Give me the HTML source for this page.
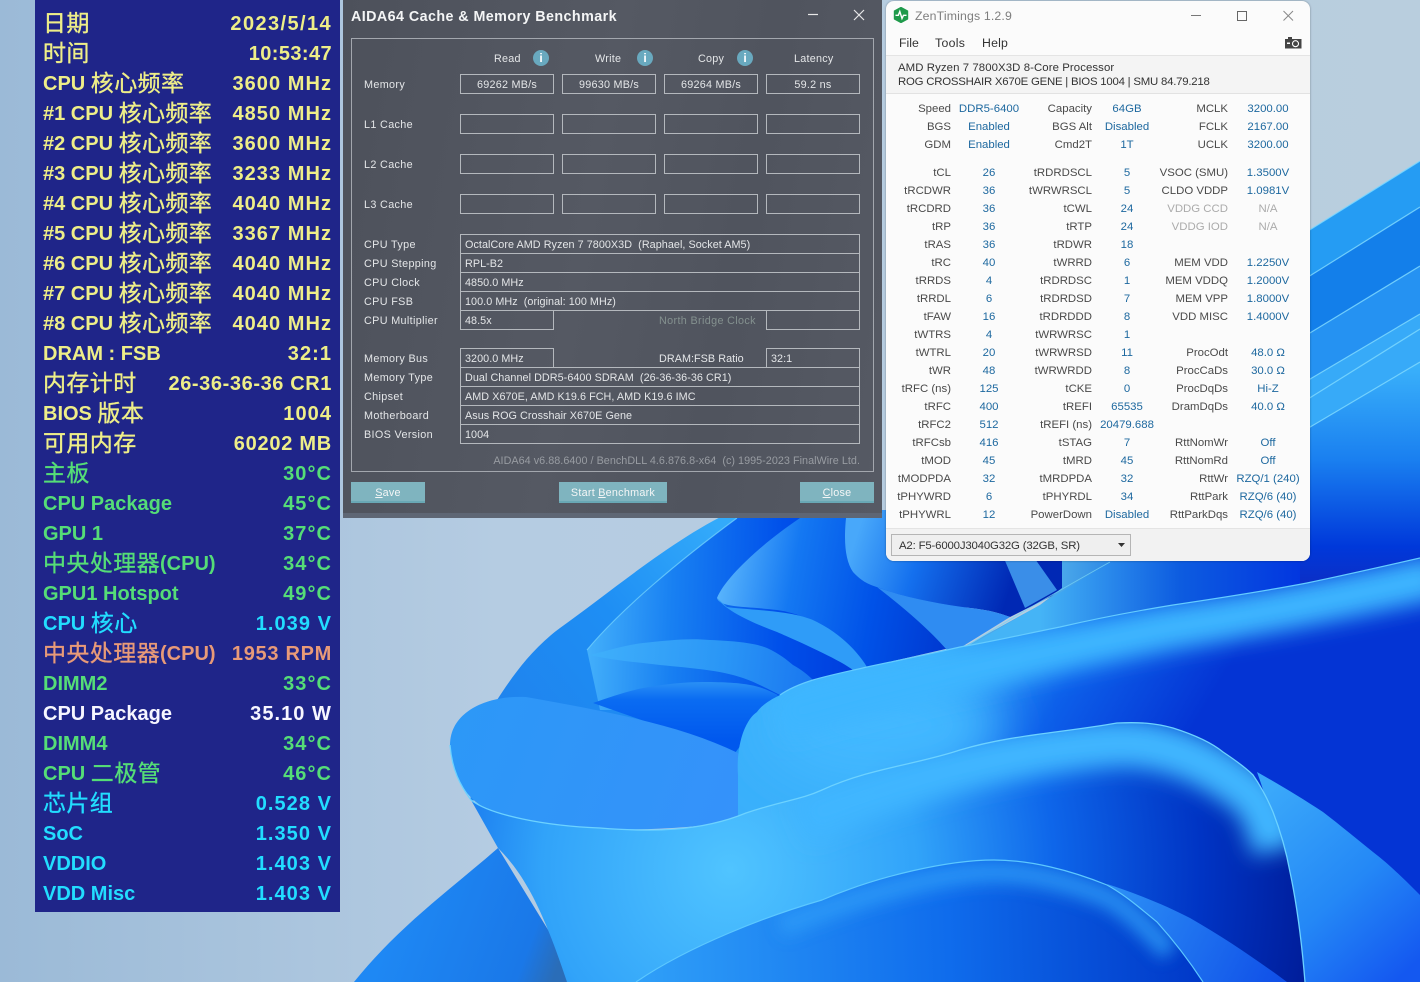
<!DOCTYPE html>
<html lang="zh"><head><meta charset="utf-8"><title>AIDA64 / ZenTimings</title>
<style>
html,body{margin:0;padding:0;width:1420px;height:982px;overflow:hidden;background:#a9c3dc}
*{box-sizing:border-box}
#wp{position:absolute;left:0;top:0}
#side{position:absolute;left:35px;top:0;width:305px;height:912px;background:#1f2589;font:bold 20px/30px "Liberation Sans","Noto Sans CJK SC",sans-serif}
#side div{position:absolute;left:8px;width:289px;height:30px;white-space:nowrap;margin-top:2px}
#side s{position:absolute;right:0;top:0;text-decoration:none;letter-spacing:1.05px}
#side em{font:400 23px/0 "Noto Sans CJK SC",sans-serif;-webkit-text-stroke:.35px currentColor;position:relative;top:1px;letter-spacing:.4px}
.y{color:#eeee88}.g{color:#55dd77}.c{color:#22ddff}.o{color:#e89a78}.w{color:#f6f6ff}
#ai{position:absolute;left:343px;top:0;width:539px;height:518px;background:linear-gradient(100deg,#4d515b,#555963 45%,#50545e 70%,#565a64);font:10.8px/19px "Liberation Sans",sans-serif;color:#e4e6e8;letter-spacing:.25px}
#ai:after{content:"";position:absolute;left:0;right:0;bottom:0;height:5px;background:#5e6674}
#ai .a{position:absolute;white-space:nowrap;margin-top:1px}
#ai .t{position:absolute;left:8px;top:7px;font:bold 14.3px/20px "Liberation Sans",sans-serif;color:#f4f5f6;letter-spacing:.43px}
#ai .f{position:absolute;left:8px;top:38px;width:523px;height:434px;border:1px solid #a3a7ae}
#ai .b{position:absolute;border:1px solid #b4b8bd;height:20px;line-height:20px;text-align:center;white-space:nowrap;overflow:hidden}
#ai .n{position:absolute;left:117px;width:400px;height:20px;border:1px solid #b4b8bd;padding:1px 0 0 4px;line-height:18px;white-space:nowrap;letter-spacing:.05px}
#ai .l{position:absolute;left:21px;white-space:nowrap;margin-top:1px;letter-spacing:.35px}
#ai .btn{position:absolute;top:482px;height:21px;background:#7fb4bf;border-bottom:2px solid #69a8b5;text-align:center;line-height:23px;color:#f4f6f6}
#ai .i{position:absolute;top:50px;width:16px;height:16px;border-radius:50%;background:#69a9bf;color:#fff;font:bold 12px/16px "Liberation Sans",sans-serif;text-align:center;letter-spacing:0}
#zt{position:absolute;left:886px;top:1px;width:424px;height:560px;background:#fbfbfb;border-radius:8px;overflow:hidden;box-shadow:0 0 2px rgba(0,0,0,.35)}
#zx{position:absolute;left:0;top:0;width:1420px;height:982px;font:11.4px/18px "Liberation Sans",sans-serif;color:#444}
#zx .r{position:absolute;left:0;width:1420px;height:18px;margin-top:1px}
#zx .r b,#zx .r i{position:absolute;top:0;font-weight:400;font-style:normal;white-space:nowrap}
#zx .r b{color:#4a4a4a}
#zx .r i{color:#1d689f;text-align:center;width:110px}
.l1{right:469px}.l2{right:328px}.l3{right:192px}
.v1{left:934px}.v2{left:1072px}.v3{left:1213px}
#zx .r .d{color:#ababab}
#zx .x{position:absolute;white-space:nowrap}
</style></head><body>
<svg id="wp" width="1420" height="982" viewBox="0 0 1420 982" xmlns="http://www.w3.org/2000/svg">
<defs>
<linearGradient id="bg" x1="0" y1="0" x2="1" y2="0"><stop offset="0" stop-color="#9bbad7"/><stop offset=".35" stop-color="#b5cce2"/><stop offset="1" stop-color="#b9cede"/></linearGradient>
<linearGradient id="back" x1="500" y1="700" x2="720" y2="530" gradientUnits="userSpaceOnUse"><stop offset="0" stop-color="#1f84ee"/><stop offset=".5" stop-color="#1e8ef4"/><stop offset="1" stop-color="#33aafa"/></linearGradient>
<linearGradient id="p1" x1="590" y1="640" x2="860" y2="650" gradientUnits="userSpaceOnUse"><stop offset="0" stop-color="#42aefa"/><stop offset=".3" stop-color="#1880f2"/><stop offset=".7" stop-color="#0050ea"/><stop offset="1" stop-color="#003cdc"/></linearGradient>
<linearGradient id="la" x1="590" y1="650" x2="810" y2="680" gradientUnits="userSpaceOnUse"><stop offset="0" stop-color="#40b0fb"/><stop offset=".6" stop-color="#2a96f6"/><stop offset="1" stop-color="#1a78f0"/></linearGradient>
<linearGradient id="p2" x1="717" y1="598" x2="950" y2="640" gradientUnits="userSpaceOnUse"><stop offset="0" stop-color="#58b4fc"/><stop offset=".3" stop-color="#1478f2"/><stop offset=".65" stop-color="#0052e8"/><stop offset="1" stop-color="#0038d0"/></linearGradient>
<linearGradient id="p3" x1="855" y1="540" x2="1010" y2="590" gradientUnits="userSpaceOnUse"><stop offset="0" stop-color="#48a8fa"/><stop offset=".4" stop-color="#1470ee"/><stop offset="1" stop-color="#0028b4"/></linearGradient>
<linearGradient id="p4" x1="1062" y1="0" x2="1310" y2="0" gradientUnits="userSpaceOnUse"><stop offset="0" stop-color="#4aa8ea"/><stop offset=".4" stop-color="#1068e0"/><stop offset="1" stop-color="#0030e0"/></linearGradient>
<linearGradient id="p5" x1="1040" y1="0" x2="1320" y2="0" gradientUnits="userSpaceOnUse"><stop offset="0" stop-color="#45b4f6"/><stop offset=".5" stop-color="#0d5ce0"/><stop offset="1" stop-color="#0030e0"/></linearGradient>
<linearGradient id="mid" x1="900" y1="650" x2="1150" y2="800" gradientUnits="userSpaceOnUse"><stop offset=".1" stop-color="#3ab0fb"/><stop offset=".55" stop-color="#0d60ea"/><stop offset="1" stop-color="#0434d4"/></linearGradient>
<linearGradient id="roll" x1="450" y1="700" x2="740" y2="810" gradientUnits="userSpaceOnUse"><stop offset="0" stop-color="#2c98f7"/><stop offset="1" stop-color="#3592fa"/></linearGradient>
<linearGradient id="rose" x1="700" y1="682" x2="700" y2="740" gradientUnits="userSpaceOnUse"><stop offset="0" stop-color="#2a90f5"/><stop offset=".3" stop-color="#0a6cf2"/><stop offset="1" stop-color="#0058ee"/></linearGradient>
<radialGradient id="wave" cx="730" cy="870" r="590" gradientUnits="userSpaceOnUse"><stop offset="0" stop-color="#50c4ff"/><stop offset=".32" stop-color="#31a3f9"/><stop offset=".55" stop-color="#0e66ea"/><stop offset=".8" stop-color="#0034c4"/><stop offset="1" stop-color="#001c98"/></radialGradient>
<linearGradient id="pb" x1="640" y1="960" x2="1200" y2="940" gradientUnits="userSpaceOnUse"><stop offset="0" stop-color="#2f9ff8"/><stop offset=".55" stop-color="#0f6cec"/><stop offset="1" stop-color="#0038c8"/></linearGradient>
<linearGradient id="sl" x1="1270" y1="790" x2="1420" y2="960" gradientUnits="userSpaceOnUse"><stop offset="0" stop-color="#3aa8fa"/><stop offset=".55" stop-color="#2488f6"/><stop offset="1" stop-color="#1458f0"/></linearGradient>
<linearGradient id="s2" x1="1110" y1="890" x2="1280" y2="980" gradientUnits="userSpaceOnUse"><stop offset="0" stop-color="#2c90f6"/><stop offset="1" stop-color="#1050e8"/></linearGradient>
<linearGradient id="bl" x1="400" y1="900" x2="560" y2="960" gradientUnits="userSpaceOnUse"><stop offset="0" stop-color="#1e88f4"/><stop offset=".8" stop-color="#1a78e8"/><stop offset="1" stop-color="#2a6db8"/></linearGradient>
<linearGradient id="rb" x1="0" y1="360" x2="0" y2="580" gradientUnits="userSpaceOnUse"><stop offset="0" stop-color="#3cb4fb"/><stop offset=".45" stop-color="#1a80f0"/><stop offset=".85" stop-color="#0038da"/><stop offset="1" stop-color="#0a30c8"/></linearGradient>
<filter id="bb" filterUnits="userSpaceOnUse" x="600" y="450" width="900" height="532"><feGaussianBlur stdDeviation="11"/></filter>
<filter id="bc" filterUnits="userSpaceOnUse" x="700" y="780" width="600" height="202"><feGaussianBlur stdDeviation="8"/></filter>
<filter id="bd" filterUnits="userSpaceOnUse" x="600" y="560" width="560" height="320"><feGaussianBlur stdDeviation="26"/></filter>
<clipPath id="wc"><path d="M471 800C490 815 545 826 600 828C650 832 700 832 746 813C785 800 800 800 822 790C870 768 915 765 960 750C1010 735 1060 733 1117 723C1140 722 1155 723 1173 728C1195 735 1212 743 1223 752C1235 760 1245 767 1253 775C1262 788 1268 800 1273 812C1280 830 1286 850 1290 872C1297 905 1302 945 1305 982L567 982C540 900 520 870 498 848Z"/></clipPath>
<clipPath id="mc"><path d="M738 775C736 745 745 720 757 712C762 705 770 700 780 695C790 688 800 684 813 680C830 675 850 671 867 667C900 660 930 654 960 647C990 642 1025 634 1060 627C1090 620 1130 612 1173 605C1220 598 1260 592 1307 583C1350 574 1385 566 1420 558L1420 982L738 982Z"/></clipPath>
<clipPath id="bc2"><path d="M636 982C690 945 770 915 822 900C880 875 950 860 994 860C1030 860 1070 870 1107 885C1125 895 1140 908 1157 922C1175 942 1190 962 1203 982Z"/></clipPath>
</defs>
<rect width="1420" height="982" fill="url(#bg)"/>
<path d="M354 982C400 925 450 890 498 848L580 982Z" fill="url(#bl)"/>
<path d="M760 500C693 522 620 585 560 628C530 650 510 680 497 700L470 800L740 830L880 700L880 500Z" fill="url(#back)"/>
<path d="M737 518C680 560 620 610 587 650L600 710L880 710L880 518Z" fill="url(#p1)"/>
<path d="M737 518C680 560 620 610 587 650" fill="none" stroke="#6fd0fd" stroke-width="1.1" opacity=".8"/>
<path d="M800 518C760 545 725 578 717 598C720 608 745 606 777 610C800 613 825 625 843 642C855 652 862 660 867 667L950 648L1000 518Z" fill="url(#p2)"/>
<path d="M717 598C725 610 750 622 777 632C800 642 840 660 853 670L867 667C860 655 843 635 817 622C795 610 745 610 727 607Z" fill="#2f9cf8"/>
<path d="M847 510C843 540 845 560 853 572C862 582 870 585 880 588C905 598 940 604 970 608C990 610 1002 614 1010 617L1064 590L1064 510Z" fill="url(#p3)"/>
<path d="M877 587C905 598 940 604 970 608C990 610 1002 614 1010 617L960 648L947 650C925 625 900 605 877 587Z" fill="#2f8cf2"/>
<path d="M1003 556L1033 556L1057 590L1025 608Z" fill="#3a8ee8"/>
<path d="M590 655C610 650 625 645 643 643C670 640 690 638 710 640C735 641 755 643 767 648C780 654 787 660 793 665C802 670 808 675 813 680L780 695C770 690 755 682 743 678C720 670 690 668 660 665C635 662 610 660 590 655Z" fill="url(#la)"/>
<path d="M593 703C610 697 625 692 643 688C665 684 685 682 703 682C725 682 740 683 750 685C762 687 770 691 778 695L735 753Z" fill="url(#rose)"/>
<path d="M526 697C490 695 450 710 450 745C452 775 465 795 480 805C510 825 620 840 745 820L738 753C680 725 610 712 526 697Z" fill="url(#roll)"/>
<path d="M1062 556L1062 588L1040 605L967 645L1060 640L1420 580L1420 470L1300 500Z" fill="url(#p4)"/>
<path d="M967 647L1040 605L1110 562L1320 556L1320 585L1060 627Z" fill="url(#p5)"/>
<path d="M967 646C1000 625 1060 590 1110 562" fill="none" stroke="#74d2f4" stroke-width="1" opacity=".8"/>
<path d="M1300 236L1420 161L1420 207L1300 282Z" fill="#259cf3"/>
<path d="M1300 282L1420 207L1420 266L1300 339Z" fill="#137fea"/>
<path d="M1300 339L1420 266L1420 314L1300 385Z" fill="#2592f2"/>
<path d="M1300 385L1420 314L1420 362L1300 433Z" fill="#37aaf8"/>
<path d="M1300 433L1420 362L1420 570L1300 600Z" fill="url(#rb)"/>
<g fill="none" stroke="#7cd8ff" stroke-width="1.2" opacity=".85"><path d="M1300 236L1420 161"/><path d="M1300 282L1420 207"/><path d="M1300 339L1420 266"/><path d="M1300 385L1420 314"/><path d="M1300 404L1420 329"/><path d="M1300 433L1420 362"/></g>
<path d="M738 775C736 745 745 720 757 712C762 705 770 700 780 695C790 688 800 684 813 680C830 675 850 671 867 667C900 660 930 654 960 647C990 642 1025 634 1060 627C1090 620 1130 612 1173 605C1220 598 1260 592 1307 583C1350 574 1385 566 1420 558L1420 982L738 982Z" fill="url(#mid)"/>
<g clip-path="url(#mc)"><ellipse cx="880" cy="725" rx="120" ry="60" fill="#42b8ff" filter="url(#bd)"/>
<path transform="translate(0,22)" d="M780 695C900 660 1060 627 1173 605C1260 592 1350 574 1440 554" fill="none" stroke="#3cb6ff" stroke-width="44" filter="url(#bb)"/></g>
<path d="M780 695C790 688 800 684 813 680C830 675 850 671 867 667C900 660 930 654 960 647C990 642 1025 634 1060 627C1090 620 1130 612 1173 605C1220 598 1260 592 1307 583C1350 574 1385 566 1420 558" fill="none" stroke="#64ccff" stroke-width="1.2"/>
<path d="M1257 772C1280 785 1300 797 1323 812C1340 825 1358 840 1373 852C1390 865 1405 880 1420 895L1420 982L1304 982C1292 900 1278 830 1257 772Z" fill="url(#sl)"/>
<path d="M471 800C490 815 545 826 600 828C650 832 700 832 746 813C785 800 800 800 822 790C870 768 915 765 960 750C1010 735 1060 733 1117 723C1140 722 1155 723 1173 728C1195 735 1212 743 1223 752C1235 760 1245 767 1253 775C1262 788 1268 800 1273 812C1280 830 1286 850 1290 872C1297 905 1302 945 1305 982L567 982C540 900 520 870 498 848Z" fill="url(#wave)"/>
<g clip-path="url(#wc)"><path transform="translate(0,20)" d="M800 800C880 768 1000 730 1117 723C1170 722 1215 745 1253 775C1265 790 1270 805 1276 830" fill="none" stroke="#3fb6ff" stroke-width="48" filter="url(#bb)"/></g>
<path d="M450 745C452 770 460 785 471 800C490 815 545 826 600 828C650 832 700 832 746 813C785 800 800 800 822 790C870 768 915 765 960 750C1010 735 1060 733 1117 723C1140 722 1155 723 1173 728C1195 735 1212 743 1223 752C1235 760 1245 767 1253 775C1262 788 1268 800 1273 812C1280 830 1286 850 1290 872C1297 905 1302 945 1305 982" fill="none" stroke="#6cd2ff" stroke-width="1.3"/>
<path d="M1107 884C1135 893 1165 905 1190 918C1225 938 1260 962 1287 982L1203 982C1190 962 1175 942 1157 922Z" fill="url(#s2)"/>
<path d="M636 982C690 945 770 915 822 900C880 875 950 860 994 860C1030 860 1070 870 1107 885C1125 895 1140 908 1157 922C1175 942 1190 962 1203 982Z" fill="url(#pb)"/>
<g clip-path="url(#bc2)"><path transform="translate(0,12)" d="M780 915C880 875 950 860 994 860C1030 860 1070 870 1107 885C1125 895 1140 908 1170 940" fill="none" stroke="#2f9cf8" stroke-width="22" filter="url(#bc)" opacity=".8"/></g>
<path d="M636 982C690 945 770 915 822 900C880 875 950 860 994 860C1030 860 1070 870 1107 885C1125 895 1140 908 1157 922C1175 942 1190 962 1203 982" fill="none" stroke="#5cc8ff" stroke-width="1.2"/>
</svg>

<div id="side">
<div class="y" style="top:7px"><em>日期</em><s style="letter-spacing:1.4px">2023/5/14</s></div>
<div class="y" style="top:37px"><em>时间</em><s style="letter-spacing:.4px">10:53:47</s></div>
<div class="y" style="top:67px">CPU <em>核心频率</em><s>3600 MHz</s></div>
<div class="y" style="top:97px">#1 CPU <em>核心频率</em><s>4850 MHz</s></div>
<div class="y" style="top:127px">#2 CPU <em>核心频率</em><s>3600 MHz</s></div>
<div class="y" style="top:157px">#3 CPU <em>核心频率</em><s>3233 MHz</s></div>
<div class="y" style="top:187px">#4 CPU <em>核心频率</em><s>4040 MHz</s></div>
<div class="y" style="top:217px">#5 CPU <em>核心频率</em><s>3367 MHz</s></div>
<div class="y" style="top:247px">#6 CPU <em>核心频率</em><s>4040 MHz</s></div>
<div class="y" style="top:277px">#7 CPU <em>核心频率</em><s>4040 MHz</s></div>
<div class="y" style="top:307px">#8 CPU <em>核心频率</em><s>4040 MHz</s></div>
<div class="y" style="top:337px">DRAM : FSB<s>32:1</s></div>
<div class="y" style="top:367px"><em>内存计时</em><s style="letter-spacing:.6px">26-36-36-36 CR1</s></div>
<div class="y" style="top:397px">BIOS <em>版本</em><s>1004</s></div>
<div class="y" style="top:427px"><em>可用内存</em><s style="letter-spacing:.75px">60202 MB</s></div>
<div class="g" style="top:457px"><em>主板</em><s>30°C</s></div>
<div class="g" style="top:487px">CPU Package<s>45°C</s></div>
<div class="g" style="top:517px">GPU 1<s>37°C</s></div>
<div class="g" style="top:547px"><em>中央处理器</em>(CPU)<s>34°C</s></div>
<div class="g" style="top:577px">GPU1 Hotspot<s>49°C</s></div>
<div class="c" style="top:607px">CPU <em>核心</em><s>1.039 V</s></div>
<div class="o" style="top:637px"><em>中央处理器</em>(CPU)<s style="letter-spacing:.7px">1953 RPM</s></div>
<div class="g" style="top:667px">DIMM2<s>33°C</s></div>
<div class="w" style="top:697px">CPU Package<s>35.10 W</s></div>
<div class="g" style="top:727px">DIMM4<s>34°C</s></div>
<div class="g" style="top:757px">CPU <em>二极管</em><s>46°C</s></div>
<div class="c" style="top:787px"><em>芯片组</em><s>0.528 V</s></div>
<div class="c" style="top:817px">SoC<s>1.350 V</s></div>
<div class="c" style="top:847px">VDDIO<s>1.403 V</s></div>
<div class="c" style="top:877px">VDD Misc<s>1.403 V</s></div>
</div>

<div id="ai">
<div class="t">AIDA64 Cache &amp; Memory Benchmark</div>
<svg style="position:absolute;left:464px;top:8px" width="60" height="14" viewBox="0 0 60 14"><path d="M1 6.5H11" stroke="#e8e8e8" stroke-width="1.2"/><path d="M47 2L57 12M57 2L47 12" stroke="#e8e8e8" stroke-width="1.2" fill="none"/></svg>
<div class="f"></div>
<div class="a" style="left:151px;top:49px">Read</div><div class="i" style="left:190px">i</div>
<div class="a" style="left:252px;top:49px">Write</div><div class="i" style="left:294px">i</div>
<div class="a" style="left:355px;top:49px">Copy</div><div class="i" style="left:394px">i</div>
<div class="a" style="left:451px;top:49px">Latency</div>
<div class="l" style="top:75px">Memory</div>
<div class="l" style="top:115px">L1 Cache</div>
<div class="l" style="top:155px">L2 Cache</div>
<div class="l" style="top:195px">L3 Cache</div>
<div class="b" style="left:117px;top:74px;width:94px">69262 MB/s</div><div class="b" style="left:219px;top:74px;width:94px">99630 MB/s</div><div class="b" style="left:321px;top:74px;width:94px">69264 MB/s</div><div class="b" style="left:423px;top:74px;width:94px">59.2 ns</div>
<div class="b" style="left:117px;top:114px;width:94px"></div><div class="b" style="left:219px;top:114px;width:94px"></div><div class="b" style="left:321px;top:114px;width:94px"></div><div class="b" style="left:423px;top:114px;width:94px"></div>
<div class="b" style="left:117px;top:154px;width:94px"></div><div class="b" style="left:219px;top:154px;width:94px"></div><div class="b" style="left:321px;top:154px;width:94px"></div><div class="b" style="left:423px;top:154px;width:94px"></div>
<div class="b" style="left:117px;top:194px;width:94px"></div><div class="b" style="left:219px;top:194px;width:94px"></div><div class="b" style="left:321px;top:194px;width:94px"></div><div class="b" style="left:423px;top:194px;width:94px"></div>

<div class="l" style="top:235px">CPU Type</div><div class="n" style="top:234px">OctalCore AMD Ryzen 7 7800X3D &nbsp;(Raphael, Socket AM5)</div>
<div class="l" style="top:254px">CPU Stepping</div><div class="n" style="top:253px">RPL-B2</div>
<div class="l" style="top:273px">CPU Clock</div><div class="n" style="top:272px">4850.0 MHz</div>
<div class="l" style="top:292px">CPU FSB</div><div class="n" style="top:291px">100.0 MHz &nbsp;(original: 100 MHz)</div>
<div class="l" style="top:311px">CPU Multiplier</div><div class="n" style="top:310px;width:94px">48.5x</div>
<div class="a" style="left:316px;top:311px;color:#84918f;letter-spacing:.35px">North Bridge Clock</div><div class="b" style="left:423px;top:310px;width:94px"></div>
<svg style="position:absolute;left:117px;top:310px" width="400" height="1"><path d="M0 .5H400" stroke="#b4b8bd"/></svg>
<div class="l" style="top:349px">Memory Bus</div><div class="n" style="top:348px;width:94px">3200.0 MHz</div>
<div class="a" style="left:316px;top:349px;letter-spacing:.05px">DRAM:FSB Ratio</div><div class="n" style="left:423px;top:348px;width:94px">32:1</div>
<div class="l" style="top:368px">Memory Type</div><div class="n" style="top:367px">Dual Channel DDR5-6400 SDRAM &nbsp;(26-36-36-36 CR1)</div>
<div class="l" style="top:387px">Chipset</div><div class="n" style="top:386px">AMD X670E, AMD K19.6 FCH, AMD K19.6 IMC</div>
<div class="l" style="top:406px">Motherboard</div><div class="n" style="top:405px">Asus ROG Crosshair X670E Gene</div>
<div class="l" style="top:425px">BIOS Version</div><div class="n" style="top:424px">1004</div>
<div class="a" style="right:22px;top:451px;color:#989ca2;letter-spacing:.03px">AIDA64 v6.88.6400 / BenchDLL 4.6.876.8-x64 &nbsp;(c) 1995-2023 FinalWire Ltd.</div>
<div class="btn" style="left:8px;width:74px"><u>S</u>ave</div>
<div class="btn" style="left:216px;width:108px">Start <u>B</u>enchmark</div>
<div class="btn" style="left:457px;width:74px"><u>C</u>lose</div>
</div>

<div id="zt">
<div style="position:absolute;left:0;top:54px;width:424px;height:39px;background:#f4f4f4;border-top:1px solid #e4e4e4;border-bottom:1px solid #e2e2e2"></div>
<div style="position:absolute;left:0;top:527px;width:424px;height:33px;background:#f2f2f2;border-top:1px solid #e4e4e4"></div>
</div>
<div id="zx">
<svg style="position:absolute;left:893px;top:7px" width="16" height="16" viewBox="0 0 16 16"><path d="M8 .3L14.7 4V12L8 15.7L1.3 12V4Z" fill="#1f9a4b" stroke="#1f9a4b" stroke-linejoin="round"/><path d="M2.5 8.3H5.3L6.8 4.5L9 11.5L10.5 8.3H13.5" fill="none" stroke="#fff" stroke-width="1.4"/></svg>
<div class="x" style="left:915px;top:7px;color:#7e7e7e;font-size:12.3px;letter-spacing:.15px">ZenTimings 1.2.9</div>
<svg style="position:absolute;left:1185px;top:8px" width="115" height="16" viewBox="0 0 115 16"><path d="M6 7.5H16" stroke="#777" stroke-width="1"/><rect x="52.5" y="3.5" width="9" height="9" fill="none" stroke="#666"/><path d="M98.5 3L108 12.5M108 3L98.5 12.5" stroke="#888" fill="none"/></svg>
<div class="x" style="left:899px;top:34px;font-size:12.3px;color:#333">File</div>
<div class="x" style="left:935px;top:34px;font-size:12.3px;color:#333;letter-spacing:.3px">Tools</div>
<div class="x" style="left:982px;top:34px;font-size:12.3px;color:#333;letter-spacing:.2px">Help</div>
<svg style="position:absolute;left:1285px;top:37px" width="17" height="12" viewBox="0 0 17 12"><path d="M0 2H3V0H7V2H16.500V11.500H0Z" fill="#444"/><circle cx="10.500" cy="6.700" r="3" fill="none" stroke="#fff" stroke-width="1.100"/><rect x="2" y="5.500" width="3" height="1.500" fill="#fff"/></svg>
<div class="x" style="left:898px;top:59px;color:#333;letter-spacing:.08px">AMD Ryzen 7 7800X3D 8-Core Processor</div>
<div class="x" style="left:898px;top:73px;color:#333;letter-spacing:-.22px">ROG CROSSHAIR X670E GENE | BIOS 1004 | SMU 84.79.218</div>

<div class="r" style="top:99px"><b class="l1">Speed</b><i class="v1">DDR5-6400</i><b class="l2">Capacity</b><i class="v2">64GB</i><b class="l3">MCLK</b><i class="v3">3200.00</i></div>
<div class="r" style="top:117px"><b class="l1">BGS</b><i class="v1">Enabled</i><b class="l2">BGS Alt</b><i class="v2">Disabled</i><b class="l3">FCLK</b><i class="v3">2167.00</i></div>
<div class="r" style="top:135px"><b class="l1">GDM</b><i class="v1">Enabled</i><b class="l2">Cmd2T</b><i class="v2">1T</i><b class="l3">UCLK</b><i class="v3">3200.00</i></div>
<div class="r" style="top:163px"><b class="l1">tCL</b><i class="v1">26</i><b class="l2">tRDRDSCL</b><i class="v2">5</i><b class="l3">VSOC (SMU)</b><i class="v3">1.3500V</i></div>
<div class="r" style="top:181px"><b class="l1">tRCDWR</b><i class="v1">36</i><b class="l2">tWRWRSCL</b><i class="v2">5</i><b class="l3">CLDO VDDP</b><i class="v3">1.0981V</i></div>
<div class="r" style="top:199px"><b class="l1">tRCDRD</b><i class="v1">36</i><b class="l2">tCWL</b><i class="v2">24</i><b class="l3 d">VDDG CCD</b><i class="v3 d">N/A</i></div>
<div class="r" style="top:217px"><b class="l1">tRP</b><i class="v1">36</i><b class="l2">tRTP</b><i class="v2">24</i><b class="l3 d">VDDG IOD</b><i class="v3 d">N/A</i></div>
<div class="r" style="top:235px"><b class="l1">tRAS</b><i class="v1">36</i><b class="l2">tRDWR</b><i class="v2">18</i></div>
<div class="r" style="top:253px"><b class="l1">tRC</b><i class="v1">40</i><b class="l2">tWRRD</b><i class="v2">6</i><b class="l3">MEM VDD</b><i class="v3">1.2250V</i></div>
<div class="r" style="top:271px"><b class="l1">tRRDS</b><i class="v1">4</i><b class="l2">tRDRDSC</b><i class="v2">1</i><b class="l3">MEM VDDQ</b><i class="v3">1.2000V</i></div>
<div class="r" style="top:289px"><b class="l1">tRRDL</b><i class="v1">6</i><b class="l2">tRDRDSD</b><i class="v2">7</i><b class="l3">MEM VPP</b><i class="v3">1.8000V</i></div>
<div class="r" style="top:307px"><b class="l1">tFAW</b><i class="v1">16</i><b class="l2">tRDRDDD</b><i class="v2">8</i><b class="l3">VDD MISC</b><i class="v3">1.4000V</i></div>
<div class="r" style="top:325px"><b class="l1">tWTRS</b><i class="v1">4</i><b class="l2">tWRWRSC</b><i class="v2">1</i></div>
<div class="r" style="top:343px"><b class="l1">tWTRL</b><i class="v1">20</i><b class="l2">tWRWRSD</b><i class="v2">11</i><b class="l3">ProcOdt</b><i class="v3">48.0 Ω</i></div>
<div class="r" style="top:361px"><b class="l1">tWR</b><i class="v1">48</i><b class="l2">tWRWRDD</b><i class="v2">8</i><b class="l3">ProcCaDs</b><i class="v3">30.0 Ω</i></div>
<div class="r" style="top:379px"><b class="l1">tRFC (ns)</b><i class="v1">125</i><b class="l2">tCKE</b><i class="v2">0</i><b class="l3">ProcDqDs</b><i class="v3">Hi-Z</i></div>
<div class="r" style="top:397px"><b class="l1">tRFC</b><i class="v1">400</i><b class="l2">tREFI</b><i class="v2">65535</i><b class="l3">DramDqDs</b><i class="v3">40.0 Ω</i></div>
<div class="r" style="top:415px"><b class="l1">tRFC2</b><i class="v1">512</i><b class="l2">tREFI (ns)</b><i class="v2">20479.688</i></div>
<div class="r" style="top:433px"><b class="l1">tRFCsb</b><i class="v1">416</i><b class="l2">tSTAG</b><i class="v2">7</i><b class="l3">RttNomWr</b><i class="v3">Off</i></div>
<div class="r" style="top:451px"><b class="l1">tMOD</b><i class="v1">45</i><b class="l2">tMRD</b><i class="v2">45</i><b class="l3">RttNomRd</b><i class="v3">Off</i></div>
<div class="r" style="top:469px"><b class="l1">tMODPDA</b><i class="v1">32</i><b class="l2">tMRDPDA</b><i class="v2">32</i><b class="l3">RttWr</b><i class="v3">RZQ/1 (240)</i></div>
<div class="r" style="top:487px"><b class="l1">tPHYWRD</b><i class="v1">6</i><b class="l2">tPHYRDL</b><i class="v2">34</i><b class="l3">RttPark</b><i class="v3">RZQ/6 (40)</i></div>
<div class="r" style="top:505px"><b class="l1">tPHYWRL</b><i class="v1">12</i><b class="l2">PowerDown</b><i class="v2">Disabled</i><b class="l3">RttParkDqs</b><i class="v3">RZQ/6 (40)</i></div>

<div style="position:absolute;left:891px;top:534px;width:240px;height:22px;background:#efefef;border:1px solid #b5b5b5"></div>
<div class="x" style="left:899px;top:537px;color:#333;letter-spacing:-.17px">A2: F5-6000J3040G32G (32GB, SR)</div>
<svg style="position:absolute;left:1117px;top:543px" width="10" height="5" viewBox="0 0 10 5"><path d="M1 0H8L4.500 4Z" fill="#333"/></svg>
</div>
</body></html>
